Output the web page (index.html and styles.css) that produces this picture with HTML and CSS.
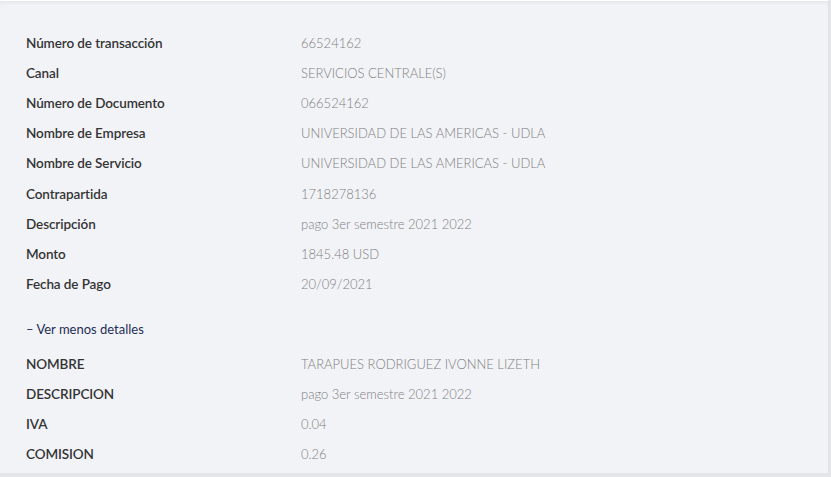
FILE: index.html
```html
<!DOCTYPE html>
<html lang="es">
<head>
<meta charset="utf-8">
<link rel="stylesheet" href="styles.css">
</head>
<body>
<div class="panel">
  <div class="rows">
    <div class="row"><span class="label">Número de transacción</span><span class="value">66524162</span></div>
    <div class="row"><span class="label">Canal</span><span class="value">SERVICIOS CENTRALE(S)</span></div>
    <div class="row"><span class="label">Número de Documento</span><span class="value">066524162</span></div>
    <div class="row"><span class="label">Nombre de Empresa</span><span class="value">UNIVERSIDAD DE LAS AMERICAS - UDLA</span></div>
    <div class="row"><span class="label">Nombre de Servicio</span><span class="value">UNIVERSIDAD DE LAS AMERICAS - UDLA</span></div>
    <div class="row"><span class="label">Contrapartida</span><span class="value">1718278136</span></div>
    <div class="row"><span class="label">Descripción</span><span class="value">pago 3er semestre 2021 2022</span></div>
    <div class="row"><span class="label">Monto</span><span class="value">1845.48 USD</span></div>
    <div class="row"><span class="label">Fecha de Pago</span><span class="value">20/09/2021</span></div>
  </div>
  <a class="toggle" href="#">– Ver menos detalles</a>
  <div class="rows">
    <div class="row"><span class="label">NOMBRE</span><span class="value">TARAPUES RODRIGUEZ IVONNE LIZETH</span></div>
    <div class="row"><span class="label">DESCRIPCION</span><span class="value">pago 3er semestre 2021 2022</span></div>
    <div class="row"><span class="label">IVA</span><span class="value">0.04</span></div>
    <div class="row"><span class="label">COMISION</span><span class="value">0.26</span></div>
  </div>
</div>
</body>
</html>
```
FILE: styles.css
```css
html, body {
  margin: 0;
  padding: 0;
  background: #e4e5e8;
}
body {
  width: 831px;
  height: 477px;
  overflow: hidden;
}
.panel {
  width: 829px;
  height: 473px;
  box-sizing: border-box;
  background: #f2f3f7;
  border-right: 1px solid #e2e3e6;
  box-shadow: inset 0 4px 4px -2px rgba(0,0,0,0.06);
  border-top: 1px solid #ffffff;
  padding: 27px 0 0 26px;
  font-family: Lato, "Open Sans", sans-serif;
  font-size: 13px;
}
.rows {
  display: flex;
  flex-direction: column;
}
.row {
  display: flex;
  align-items: center;
  height: 30.1px;
}
.label {
  width: 275px;
  color: #343434;
  font-weight: 600;
  font-size: 13.5px;
  letter-spacing: -0.1px;
}
.value {
  color: #808080;
  font-weight: 300;
  letter-spacing: 0;
}
.toggle {
  display: block;
  color: #1f2d55;
  text-decoration: none;
  font-size: 13px;
  margin: 22px 0 12px;
  line-height: 16px;
}
```
